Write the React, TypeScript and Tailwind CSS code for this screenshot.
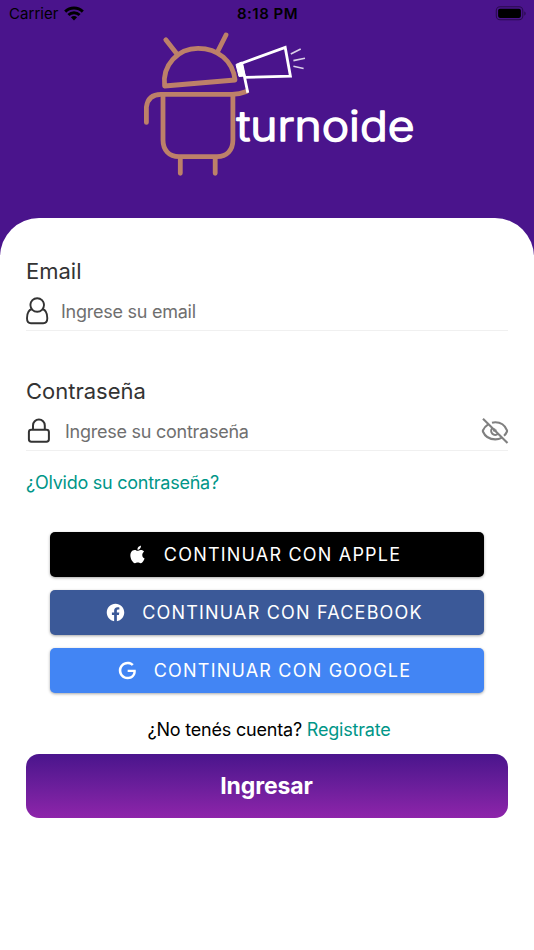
import type { ReactNode } from 'react'

function StatusBar() {
  return (
    <div className="flex h-7 items-center justify-between pl-[9px] pr-2 text-black">
      <div className="flex w-[160px] items-center gap-[5px]">
        <span className="text-[15px] tracking-[0.05px]">Carrier</span>
        <svg viewBox="0 0 20 15" className="-mt-0.5 h-[15px] w-5" fill="none" stroke="currentColor" strokeWidth="2.9">
          <path d="M1.2 5.6a12.6 12.6 0 0 1 17.6 0" />
          <path d="M4.4 9a8 8 0 0 1 11.2 0" />
          <path d="M10 14.4 6.9 11.3a4.4 4.4 0 0 1 6.2 0Z" fill="currentColor" stroke="none" />
        </svg>
      </div>
      <span className="text-[15px] font-semibold tracking-[0.5px]">8:18 PM</span>
      <div className="flex w-[160px] justify-end">
        <svg viewBox="0 0 32 15" className="-mt-0.5 -mr-px h-[15px] w-8">
          <rect x="1.3" y="0.8" width="26.5" height="13" rx="3.8" fill="none" stroke="#000" strokeOpacity="0.45" strokeWidth="1.1" />
          <rect x="3.1" y="2.7" width="22.8" height="9.2" rx="1.8" />
          <path d="M29.4 5.3c1.6.8 1.6 3.6 0 4.4Z" fillOpacity="0.5" />
        </svg>
      </div>
    </div>
  )
}

function Logo() {
  return (
    <svg viewBox="140 28 280 152" className="ml-[140px] h-[152px] w-[280px]" fill="none">
      <g stroke="#bd8069" strokeWidth="4.8" strokeLinecap="round" strokeLinejoin="round">
        <path d="M164.6 86C162 65 178 48.3 198 48.3C218 48.3 233 61 235 80Z" />
        <path d="M165.8 39.8 176.6 53.6M226 35 218.2 50.5" />
        <path d="M146.4 122.4V107C147.5 98 153 94.3 161 94.3H232C238 94.3 242 93.3 246.5 91.5" />
        <path d="M163 95V140C163 150 169 156.6 179 156.6H217C227 156.6 232.9 150 232.9 140V95" />
        <path d="M180.3 158V173.3M215.2 158V173.3" />
      </g>
      <g stroke="#fff" strokeWidth="2.8">
        <path d="M247.8 92.8 241.7 63.3 285.2 47.4 290.4 76.1 244.5 77.4" />
        <path d="M236 64.5 241.5 62 245.2 76 239 76.5Z" fill="#fff" strokeWidth="1" />
        <path d="M290.8 54 300.7 49M293.4 60.6 305 58.3M293.4 66.3 303.6 68.5" strokeWidth="1.6" strokeOpacity="0.8" />
      </g>
      <text
        x="236.5"
        y="140.8"
        textLength="178"
        lengthAdjust="spacingAndGlyphs"
        className="font-['Inter'] text-[41.5px] font-light"
        fill="#fff"
        stroke="#fff"
        strokeWidth="1.5"
        strokeLinejoin="round"
      >
        turnoide
      </text>
    </svg>
  )
}

function UserIcon() {
  return (
    <svg viewBox="0 0 24 28" className="h-7 w-6" fill="none" stroke="#333" strokeWidth="1.9">
      <circle cx="11.2" cy="8" r="6.8" />
      <path d="M5.9 12C2.2 13.2 1 17 1 21.2C1 24.7 2.4 26.2 5 26.2H17.2C19.8 26.2 21.3 24.7 21.3 21.2C21.3 17 20 13.2 16.500 12" />
    </svg>
  )
}

function LockIcon() {
  return (
    <svg viewBox="0 0 24 26" className="h-[26px] w-6" fill="none" stroke="#333" strokeWidth="2">
      <rect x="1.9" y="11.7" width="20" height="12" rx="2.4" />
      <path d="M6 11.7V7.4a5.9 5.9 0 0 1 11.8 0v4.3" />
    </svg>
  )
}

function EyeOffIcon() {
  return (
    <svg viewBox="0 0 28 28" className="-mr-px h-7 w-7" fill="none" stroke="#808080" strokeWidth="2.1">
      <path d="M2 1.8 26.5 26" />
      <path d="M7.2 7.4C4.8 8.9 2.9 11.1 1.9 13.5C1.8 13.8 1.8 14.2 1.9 14.5C4 19.4 9 22.4 14.3 22.4C16.5 22.4 18.7 21.9 20.6 20.9" />
      <path d="M11 5.7C12 5.4 13.2 5.3 14.3 5.3C19.4 5.3 24 8.5 26 13.3C26.1 13.6 26.1 14.2 26 14.5C25.3 16.2 24.4 17.5 23 18.7" />
      <path d="M11.2 11.2A4 4 0 0 0 16.9 16.8" />
      <path d="M13.2 11.5V13.5H15.5" />
    </svg>
  )
}

const brandPaths = {
  apple:
    'M18.71,19.5C17.88,20.74 17,21.95 15.66,21.97C14.32,22 13.89,21.18 12.37,21.18C10.84,21.18 10.37,21.95 9.1,22C7.79,22.05 6.8,20.68 5.96,19.47C4.25,17 2.94,12.45 4.7,9.39C5.57,7.87 7.13,6.91 8.82,6.88C10.1,6.86 11.32,7.75 12.11,7.75C12.89,7.75 14.37,6.68 15.92,6.84C16.57,6.87 18.39,7.1 19.56,8.82C19.47,8.88 17.39,10.1 17.41,12.63C17.44,15.65 20.06,16.66 20.09,16.67C20.06,16.74 19.67,18.11 18.71,19.5M13,3.5C13.73,2.67 14.94,2.04 15.94,2C16.07,3.17 15.6,4.35 14.9,5.19C14.21,6.04 13.07,6.7 11.95,6.61C11.8,5.46 12.36,4.26 13,3.5Z',
  facebook:
    'M12 2.04C6.5 2.04 2 6.53 2 12.06C2 17.06 5.66 21.21 10.44 21.96V14.96H7.9V12.06H10.44V9.85C10.44 7.34 11.93 5.96 14.22 5.96C15.31 5.96 16.45 6.15 16.45 6.15V8.62H15.19C13.95 8.62 13.56 9.39 13.56 10.06V12.06H16.34L15.89 14.96H13.56V21.96C18.34 21.21 22 17.06 22 12.06C22 6.53 17.5 2.04 12 2.04Z',
  google:
    'M21.35,11.1H12.18V13.83H18.69C18.36,17.64 15.19,19.27 12.19,19.27C8.36,19.27 5,16.25 5,12C5,7.9 8.2,4.73 12.2,4.73C15.29,4.73 17.1,6.7 17.1,6.7L19,4.72C19,4.72 16.56,2 12.1,2C6.42,2 2.03,6.8 2.03,12C2.03,17.05 6.16,22 12.25,22C17.6,22 21.5,18.33 21.5,12.91C21.5,11.76 21.35,11.1 21.35,11.1V11.1Z',
}

function SocialButton({ brand, color, children }: { brand: keyof typeof brandPaths; color: string; children: ReactNode }) {
  return (
    <button
      className={`${color} flex h-[45px] w-full items-center justify-center gap-[16px] rounded-[5px] pr-[6px] text-[18px] tracking-[1.2px] text-white shadow-[0_1px_3px_rgba(0,0,0,0.35)]`}
    >
      <svg viewBox="0 0 24 24" className="h-[21px] w-[21px]" fill="currentColor">
        <path d={brandPaths[brand]} />
      </svg>
      <span>{children}</span>
    </button>
  )
}

export default function App() {
  return (
    <div className="flex h-[950px] w-[534px] flex-col overflow-hidden bg-[#4a148c] font-['Inter',sans-serif]">
      <StatusBar />
      <Logo />
      <main className="mt-[38px] flex-1 rounded-t-[39px] bg-white px-[26px] pt-[38px]">
        <label className="block h-[30px] text-[22px] leading-[30px] text-[#333]">Email</label>
        <div className="flex h-[45px] items-center gap-[11px] border-b border-[#f0f0f0] pt-[6px]">
          <UserIcon />
          <input
            className="flex-1 text-[18px] tracking-[-0.25px] outline-none placeholder:text-[#6f6f6f] placeholder:opacity-100"
            placeholder="Ingrese su email"
          />
        </div>

        <label className="mt-[45px] block h-[30px] text-[22px] leading-[30px] text-[#333]">Contraseña</label>
        <div className="flex h-[45px] items-center border-b border-[#f0f0f0] pt-[6px]">
          <span className="ml-px mr-[14px]">
            <LockIcon />
          </span>
          <input
            type="password"
            className="min-w-0 flex-1 text-[18px] tracking-[-0.25px] outline-none placeholder:text-[#6f6f6f] placeholder:opacity-100"
            placeholder="Ingrese su contraseña"
          />
          <EyeOffIcon />
        </div>
        <a className="mt-[19px] block h-[26px] text-[18px] leading-[26px] tracking-[-0.25px] text-[#009688]">
          ¿Olvido su contraseña?
        </a>

        <div className="mx-6 mt-9 flex flex-col gap-[13px]">
          <SocialButton brand="apple" color="bg-black">
            CONTINUAR CON APPLE
          </SocialButton>
          <SocialButton brand="facebook" color="bg-[#3b5998]">
            CONTINUAR CON FACEBOOK
          </SocialButton>
          <SocialButton brand="google" color="bg-[#4285f4]">
            CONTINUAR CON GOOGLE
          </SocialButton>
        </div>

        <p className="mt-6 pl-1 text-center text-[18px] leading-[26px] tracking-[-0.2px] text-black">
          ¿No tenés cuenta? <a className="text-[#009688]">Registrate</a>
        </p>
        <button className="mt-[11px] h-[64px] w-full rounded-[13px] bg-linear-to-b from-[#4a148c] to-[#8e24aa] pr-px text-[23px] font-bold tracking-[-0.1px] text-white">
          Ingresar
        </button>
      </main>
    </div>
  )
}
